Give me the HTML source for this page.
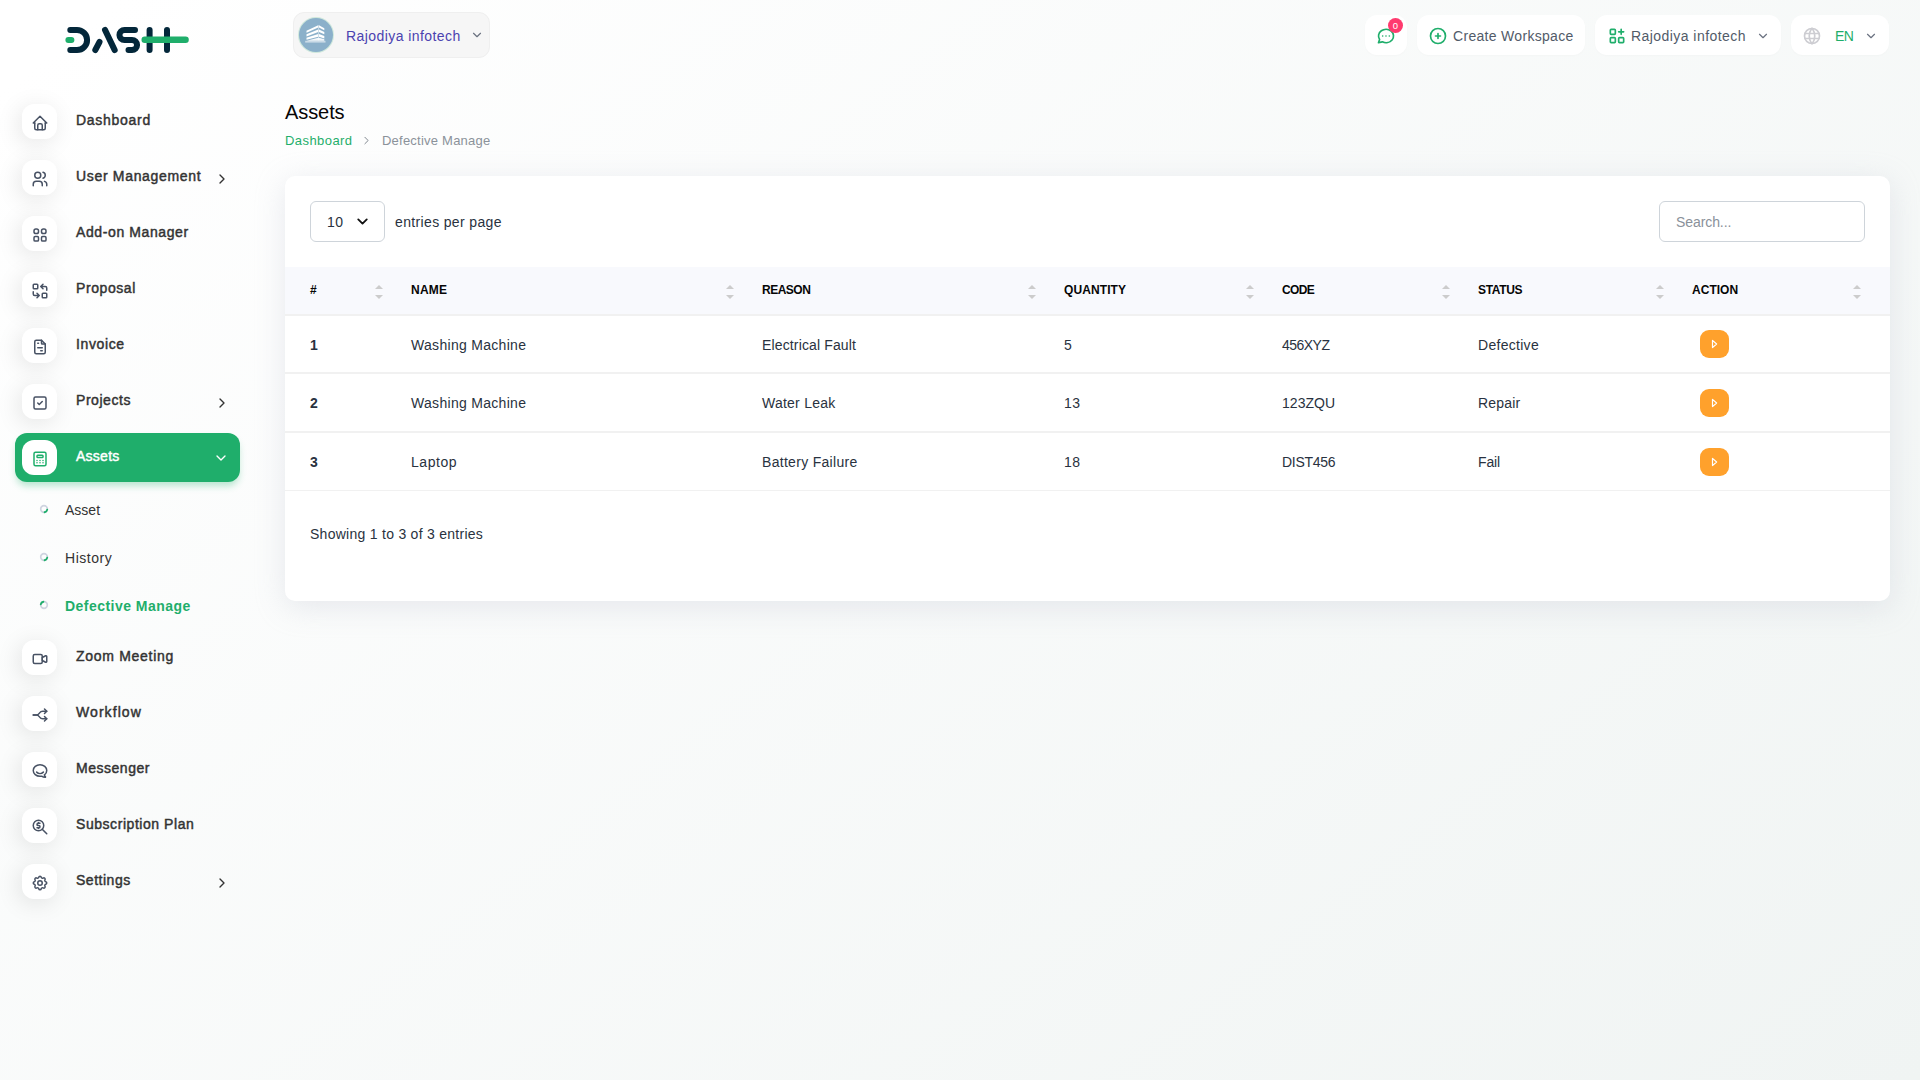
<!DOCTYPE html>
<html lang="en"><head>
<meta charset="utf-8">
<title>Assets - Defective Manage</title>
<style>
*{box-sizing:border-box;margin:0;padding:0}
html,body{width:1920px;height:1080px;overflow:hidden}
body{font-family:"Liberation Sans",sans-serif;font-size:14px;color:#293240;position:relative;
background:linear-gradient(141.55deg,rgba(240,244,243,0) 3.46%,#f0f4f3 99.86%),#fff}
.abs{position:absolute}
.t{position:absolute;white-space:nowrap;line-height:20px}
svg{display:block}
.ic{fill:none;stroke:currentColor;stroke-width:2;stroke-linecap:round;stroke-linejoin:round}

/* sidebar */
.mi{position:absolute;left:22px;width:35px;height:35px;border-radius:12px;background:#fff;
box-shadow:-3px 4px 23px rgba(0,0,0,.1);color:#485264}
.mi svg{position:absolute;left:8.800px;top:9.500px;width:18px;height:18px}
.mi.on{color:#1fae6b;box-shadow:none}
.act{position:absolute;left:15px;width:225px;height:49px;border-radius:12px;background:#1fae6b;
box-shadow:0 5px 7px -1px rgba(31,174,107,.3)}
.ml{position:absolute;left:76px;font-size:14px;font-weight:400;-webkit-text-stroke:0.450px currentColor;color:#333;white-space:nowrap;line-height:20px}
.ml.on{color:#fff}
.arr{position:absolute;left:214px;width:16px;height:16px;color:#333}
.arr svg{width:16px;height:16px}
.arr.on{color:#fff;margin-left:-1.500px;margin-top:-1.300px}
.sub{position:absolute;left:65px;font-size:14px;color:#333;white-space:nowrap;line-height:20px}
.sub.on{color:#1fae6b;font-weight:700}
.dot{position:absolute;left:39px;width:10px;height:10px}
.dot.on{transform:rotate(180deg)}

/* header */
.hb{position:absolute;top:15px;height:40px;border-radius:12px;background:#fff;box-shadow:0 1px 2px rgba(0,0,0,.02)}
.hb .t{font-size:14px;font-weight:500;color:#525b69;top:11px}
.hb svg{position:absolute}

/* card */
.card{position:absolute;left:285px;top:176px;width:1605px;height:425px;background:#fff;border-radius:10px;
box-shadow:0 6px 30px rgba(182,186,203,.3)}
.th{position:absolute;top:283px;font-size:12px;font-weight:700;color:#060606;white-space:nowrap;line-height:14px}
.td{position:absolute;font-size:14px;color:#293240;white-space:nowrap;line-height:20px}
.b{font-weight:700}
.srt{position:absolute;top:285px;width:8px;height:14px}
.btn{position:absolute;left:1700px;width:29px;height:28px;border-radius:9px;background:#ffa12c;color:#fff}
.btn svg{position:absolute;left:9px;top:8.400px;width:12px;height:12px;stroke-width:2.400}
.hl{position:absolute;left:285px;width:1605px;background:#f1f1f1}
</style>
</head>
<body>

<nav>
<!-- LOGO -->
<svg class="abs" style="left:66px;top:26px;overflow:visible" width="124" height="28" viewBox="0 0 124 28">
  <g fill="none" stroke="#03273a" stroke-width="6" stroke-linecap="round" stroke-linejoin="round">
    <path d="M4.300 3.900H11A10.100 10.100 0 0 1 11 24.100H4.300"></path>
    <path d="M29.300 24L33.500 16"></path>
    <path d="M39 3.900L48.700 24.100"></path>
    <path d="M69 3.900H58.500a5.050 5.050 0 0 0 0 10.100H66a5.050 5.050 0 0 1 0 10.100H62.500"></path>
    <path d="M83.600 3.900V24.100M101 3.900V24.100"></path>
  </g>
  <path d="M2.400 14H5.400" stroke="#1fae6b" stroke-width="6" stroke-linecap="round"></path>
  <path d="M78.700 13.800H119.600" stroke="#1fae6b" stroke-width="6.400" stroke-linecap="round"></path>
</svg>

<!-- SIDEBAR -->
<div class="mi" style="top:104px"><svg class="ic" viewBox="0 0 24 24"><path d="M5 12H3l9-9 9 9h-2"></path><path d="M5 12v7a2 2 0 0 0 2 2h10a2 2 0 0 0 2-2v-7"></path><path d="M9 21v-6a2 2 0 0 1 2-2h2a2 2 0 0 1 2 2v6"></path></svg></div>
<div class="ml" style="top: 110px; letter-spacing: 0.717px;">Dashboard</div>
<div class="mi" style="top:160px"><svg class="ic" viewBox="0 0 24 24"><circle cx="9" cy="7" r="4"></circle><path d="M3 21v-2a4 4 0 0 1 4-4h4a4 4 0 0 1 4 4v2"></path><path d="M16 3.13a4 4 0 0 1 0 7.75"></path><path d="M21 21v-2a4 4 0 0 0-3-3.850"></path></svg></div>
<div class="ml" style="top: 166px; letter-spacing: 0.68px;">User Management</div>
<div class="arr" style="top:171px"><svg class="ic" viewBox="0 0 24 24"><path d="M9 6l6 6-6 6"></path></svg></div>
<div class="mi" style="top:216px"><svg class="ic" viewBox="0 0 24 24"><rect x="4" y="4" width="6" height="6" rx="2.500"></rect><rect x="14" y="4" width="6" height="6" rx="2.500"></rect><rect x="4" y="14" width="6" height="6" rx="1.500"></rect><rect x="14" y="14" width="6" height="6" rx="1.500"></rect></svg></div>
<div class="ml" style="top: 222px; letter-spacing: 0.606px;">Add-on Manager</div>
<div class="mi" style="top:272px"><svg class="ic" viewBox="0 0 24 24"><rect x="3" y="3" width="6" height="6" rx="1"></rect><rect x="15" y="15" width="6" height="6" rx="1"></rect><path d="M21 11V8a2 2 0 0 0-2-2h-6l3 3m0-6l-3 3"></path><path d="M3 13v3a2 2 0 0 0 2 2h6l-3-3m0 6l3-3"></path></svg></div>
<div class="ml" style="top: 278px; letter-spacing: 0.576px;">Proposal</div>
<div class="mi" style="top:328px"><svg class="ic" viewBox="0 0 24 24"><path d="M14 3v4a1 1 0 0 0 1 1h4"></path><path d="M17 21H7a2 2 0 0 1-2-2V5a2 2 0 0 1 2-2h7l5 5v11a2 2 0 0 1-2 2z"></path><path d="M9 7h1M9 13h6M13 17h2"></path></svg></div>
<div class="ml" style="top: 334px; letter-spacing: 0.628px;">Invoice</div>
<div class="mi" style="top:384px"><svg class="ic" viewBox="0 0 24 24"><rect x="4" y="4" width="16" height="16" rx="2"></rect><path d="M9 12l2 2 4-4"></path></svg></div>
<div class="ml" style="top: 390px; letter-spacing: 0.556px;">Projects</div>
<div class="arr" style="top:395px"><svg class="ic" viewBox="0 0 24 24"><path d="M9 6l6 6-6 6"></path></svg></div>
<div class="act" style="top:433px"></div>
<div class="mi on" style="top:440px"><svg class="ic" viewBox="0 0 24 24"><rect x="4" y="3" width="16" height="18" rx="2"></rect><rect x="8" y="7" width="8" height="3" rx="1"></rect><path d="M8 14v.01M12 14v.01M16 14v.01M8 17v.01M12 17v.01M16 17v.01"></path></svg></div>
<div class="ml on" style="top: 446px; letter-spacing: 0.259px;">Assets</div>
<div class="arr on" style="top:451px"><svg class="ic" viewBox="0 0 24 24"><path d="M6 9l6 6 6-6"></path></svg></div>
<div class="mi" style="top:640px"><svg class="ic" viewBox="0 0 24 24"><path d="M15 10l4.553-2.276A1 1 0 0 1 21 8.618v6.764a1 1 0 0 1-1.447.894L15 14v-4z"></path><rect x="3" y="6" width="12" height="12" rx="2"></rect></svg></div>
<div class="ml" style="top: 646px; letter-spacing: 0.709px;">Zoom Meeting</div>
<div class="mi" style="top:696px"><svg class="ic" viewBox="0 0 24 24"><path d="M21 17h-5.397a5 5 0 0 1-4.096-2.133l-.514-.734A5 5 0 0 0 6.897 12H3"></path><path d="M21 7h-5.395a5 5 0 0 0-4.098 2.135l-.51.730A5 5 0 0 1 6.900 12H3"></path><path d="M18 10l3-3-3-3"></path><path d="M18 20l3-3-3-3"></path></svg></div>
<div class="ml" style="top: 702px; letter-spacing: 1.067px;">Workflow</div>
<div class="mi" style="top:752px"><svg class="ic" viewBox="0 0 24 24"><path d="M17.802 17.292s.077-.055.200-.149c1.843-1.425 3-3.490 3-5.789 0-4.286-4.030-7.764-9-7.764s-9 3.478-9 7.764c0 4.288 4.030 7.646 9 7.646.424 0 1.120-.028 2.088-.084 1.262.820 3.104 1.493 4.716 1.493.499 0 .734-.410.414-.828-.486-.596-1.156-1.551-1.416-2.290z"></path><path d="M7.500 13.500c2.500 2.500 6.500 2.500 9 0"></path></svg></div>
<div class="ml" style="top: 758px; letter-spacing: 0.521px;">Messenger</div>
<div class="mi" style="top:808px"><svg class="ic" viewBox="0 0 24 24"><circle cx="10" cy="10" r="7"></circle><path d="M21 21l-6-6"></path><path d="M12 7H9.500a1.500 1.500 0 0 0 0 3h1a1.500 1.500 0 0 1 0 3H8"></path><path d="M10 13v1m0-8v1"></path></svg></div>
<div class="ml" style="top: 814px; letter-spacing: 0.552px;">Subscription Plan</div>
<div class="mi" style="top:864px"><svg class="ic" viewBox="0 0 24 24"><path d="M10.325 4.317c.426-1.756 2.924-1.756 3.350 0a1.724 1.724 0 0 0 2.573 1.066c1.543-.940 3.310.826 2.370 2.370a1.724 1.724 0 0 0 1.065 2.572c1.756.426 1.756 2.924 0 3.350a1.724 1.724 0 0 0-1.066 2.573c.940 1.543-.826 3.310-2.370 2.370a1.724 1.724 0 0 0-2.572 1.065c-.426 1.756-2.924 1.756-3.350 0a1.724 1.724 0 0 0-2.573-1.066c-1.543.940-3.310-.826-2.370-2.370a1.724 1.724 0 0 0-1.065-2.572c-1.756-.426-1.756-2.924 0-3.350a1.724 1.724 0 0 0 1.066-2.573c-.940-1.543.826-3.310 2.370-2.370 1 .608 2.296.070 2.572-1.065z"></path><circle cx="12" cy="12" r="3"></circle></svg></div>
<div class="ml" style="top: 870px; letter-spacing: 0.518px;">Settings</div>
<div class="arr" style="top:875px"><svg class="ic" viewBox="0 0 24 24"><path d="M9 6l6 6-6 6"></path></svg></div>
<svg class="dot" style="top:504px" viewBox="0 0 10 10"><circle cx="5" cy="5" r="3.300" fill="none" stroke="#cfd4e0" stroke-width="1.700"></circle><path d="M8.250 5.600A3.300 3.300 0 0 1 5.600 8.250" fill="none" stroke="#1fae6b" stroke-width="1.800" stroke-linecap="round"></path></svg>
<div class="sub" style="top: 500px; letter-spacing: 0.012px;">Asset</div>
<svg class="dot" style="top:552px" viewBox="0 0 10 10"><circle cx="5" cy="5" r="3.300" fill="none" stroke="#cfd4e0" stroke-width="1.700"></circle><path d="M8.250 5.600A3.300 3.300 0 0 1 5.600 8.250" fill="none" stroke="#1fae6b" stroke-width="1.800" stroke-linecap="round"></path></svg>
<div class="sub" style="top: 548px; letter-spacing: 0.521px;">History</div>
<svg class="dot on" style="top:600px" viewBox="0 0 10 10"><circle cx="5" cy="5" r="3.300" fill="none" stroke="#cfd4e0" stroke-width="1.700"></circle><path d="M8.250 5.600A3.300 3.300 0 0 1 5.600 8.250" fill="none" stroke="#1fae6b" stroke-width="1.800" stroke-linecap="round"></path></svg>
<div class="sub on" style="top: 596px; letter-spacing: 0.465px;">Defective Manage</div>

</nav>
<header>
<!-- HEADER: profile -->
<div class="abs" style="left:293px;top:12px;width:197px;height:46px;border-radius:11px;background:#f6f6f6;border:1px solid #efefef"></div>
<div class="abs" style="left:299px;top:18px;width:34px;height:34px;border-radius:50%;background:#8bb0ca;box-shadow:0 0 0 1px rgba(31,174,107,.18)"></div>
<svg class="abs" style="left:304px;top:24px" width="24" height="20" viewBox="0 0 24 20">
  <g fill="#fff">
    <path d="M2.500 6.700L14.200 1.200V3.400L2.500 8.700z"></path>
    <path d="M2.500 10.200L14.200 5.400V8L2.500 12.400z"></path>
    <path d="M2.500 13.700L14.200 10V12.700L2.500 15.800z"></path>
    <path d="M15 1.200L20.300 4.200V6.300L15 3.400z"></path>
    <path d="M15 5.400L20.300 7.900V10.200L15 8z"></path>
    <path d="M15 10L20.300 11.900V14.400L15 12.700z"></path>
    <path d="M14.200 1.200h.8v15h-.8z" opacity=".6"></path>
    <path d="M1.200 16.800h20.300v1.800H1.200z" opacity=".55"></path>
    <path d="M2.500 16.800L14.200 13.800h.8l5.300 1.400v1.600z" opacity=".9"></path>
  </g>
</svg>
<div class="t" style="left: 346px; top: 26px; font-size: 14px; font-weight: 500; color: rgb(75, 66, 176); letter-spacing: 0.431px;">Rajodiya infotech</div>
<svg class="abs ic" style="left:470px;top:28px;color:#6b7280;stroke-width:2" width="14" height="14" viewBox="0 0 24 24"><path d="M6 9l6 6 6-6"></path></svg>

<!-- HEADER: right buttons -->
<div class="hb" style="left:1365px;width:42px">
  <svg class="ic" style="left:11px;top:11px;color:#1fae6b" width="20" height="20" viewBox="0 0 24 24"><path d="M3 20l1.300-3.900C1.976 12.663 2.874 8.228 6.400 5.726c3.526-2.501 8.590-2.296 11.845.480 3.255 2.777 3.695 7.266 1.029 10.501C16.608 19.942 11.659 20.922 7.700 19L3 20"></path><path d="M12 12v.01M8 12v.01M16 12v.01"></path></svg>
  <div class="abs" style="left:23px;top:3px;width:15px;height:15px;border-radius:50%;background:#ff3a6e"></div>
  <div class="t" style="left:23px;top:3px;width:15px;text-align:center;font-size:9.500px;line-height:15px;color:#fff">0</div>
</div>
<div class="hb" style="left:1417px;width:168px">
  <svg class="ic" style="left:11px;top:11px;color:#1fae6b" width="20" height="20" viewBox="0 0 24 24"><circle cx="12" cy="12" r="9"></circle><path d="M9 12h6M12 9v6"></path></svg>
  <div class="t" style="left: 36px; letter-spacing: 0.307px;">Create Workspace</div>
</div>
<div class="hb" style="left:1595px;width:186px">
  <svg class="ic" style="left:11.600px;top:11px;color:#1fae6b" width="20" height="20" viewBox="0 0 24 24"><rect x="4" y="4" width="6" height="6" rx="1"></rect><rect x="4" y="14" width="6" height="6" rx="1"></rect><rect x="14" y="14" width="6" height="6" rx="1"></rect><path d="M14 7h6M17 4v6"></path></svg>
  <div class="t" style="left: 36px; letter-spacing: 0.443px;">Rajodiya infotech</div>
  <svg class="ic" style="left:161px;top:13.500px;color:#6b7280" width="14" height="14" viewBox="0 0 24 24"><path d="M6 9l6 6 6-6"></path></svg>
</div>
<div class="hb" style="left:1791px;width:98px">
  <svg class="ic" style="left:11px;top:11px;color:#cdcdd2" width="20" height="20" viewBox="0 0 24 24"><circle cx="12" cy="12" r="9"></circle><path d="M3.600 9h16.800M3.600 15h16.800M11.500 3a17 17 0 0 0 0 18M12.500 3a17 17 0 0 1 0 18"></path></svg>
  <div class="t" style="left: 44px; color: rgb(31, 174, 107); letter-spacing: -0.5px;">EN</div>
  <svg class="ic" style="left:73px;top:13.500px;color:#6b7280" width="14" height="14" viewBox="0 0 24 24"><path d="M6 9l6 6 6-6"></path></svg>
</div>

</header>
<main>
<!-- PAGE TITLE -->
<div class="t" style="left: 285px; top: 99px; font-size: 20px; line-height: 26px; color: rgb(6, 6, 6); letter-spacing: -0.084px;">Assets</div>
<div class="t" style="left: 285px; top: 131px; font-size: 13px; color: rgb(31, 174, 107); letter-spacing: 0.436px;">Dashboard</div>
<svg class="abs ic" style="left:360px;top:134px;color:#7d858d;stroke-width:1.800" width="13" height="13" viewBox="0 0 24 24"><path d="M9 6l6 6-6 6"></path></svg>
<div class="t" style="left: 382px; top: 131px; font-size: 13px; color: rgb(139, 146, 154); letter-spacing: 0.228px;">Defective Manage</div>

<!-- CARD -->
<div class="card"></div>
<div class="abs" style="left:310px;top:201px;width:75px;height:41px;border:1px solid #ced4da;border-radius:6px;background:#fff"></div>
<div class="t" style="left: 327px; top: 212px; color: rgb(41, 50, 64); letter-spacing: 0.438px;">10</div>
<svg class="abs ic" style="left:353.800px;top:212.600px;color:#111;stroke-width:2.600" width="17" height="17" viewBox="0 0 24 24"><path d="M6 9l6 6 6-6"></path></svg>
<div class="t" style="left: 395px; top: 212px; letter-spacing: 0.352px;">entries per page</div>
<div class="abs" style="left:1659px;top:201px;width:206px;height:41px;border:1px solid #ced4da;border-radius:6px;background:#fff"></div>
<div class="t" style="left: 1676px; top: 212px; color: rgb(138, 145, 154); letter-spacing: -0.082px;">Search...</div>

<div class="abs" style="left:285px;top:267px;width:1605px;height:47px;background:#f8f9fd"></div>
<div class="th" style="left:310px">#</div>
<svg class="srt" style="left:375px" viewBox="0 0 8 14"><path d="M0 4L4 0L8 4z" fill="#ccc"></path><path d="M0 10L4 14L8 10z" fill="#ccc"></path></svg>
<div class="th" style="left: 411px; letter-spacing: 0.245px;">NAME</div>
<svg class="srt" style="left:726px" viewBox="0 0 8 14"><path d="M0 4L4 0L8 4z" fill="#ccc"></path><path d="M0 10L4 14L8 10z" fill="#ccc"></path></svg>
<div class="th" style="left: 762px; letter-spacing: -0.5px;">REASON</div>
<svg class="srt" style="left:1028px" viewBox="0 0 8 14"><path d="M0 4L4 0L8 4z" fill="#ccc"></path><path d="M0 10L4 14L8 10z" fill="#ccc"></path></svg>
<div class="th" style="left: 1064px; letter-spacing: 0.096px;">QUANTITY</div>
<svg class="srt" style="left:1246px" viewBox="0 0 8 14"><path d="M0 4L4 0L8 4z" fill="#ccc"></path><path d="M0 10L4 14L8 10z" fill="#ccc"></path></svg>
<div class="th" style="left: 1282px; letter-spacing: -0.62px;">CODE</div>
<svg class="srt" style="left:1442px" viewBox="0 0 8 14"><path d="M0 4L4 0L8 4z" fill="#ccc"></path><path d="M0 10L4 14L8 10z" fill="#ccc"></path></svg>
<div class="th" style="left: 1478px; letter-spacing: -0.35px;">STATUS</div>
<svg class="srt" style="left:1656px" viewBox="0 0 8 14"><path d="M0 4L4 0L8 4z" fill="#ccc"></path><path d="M0 10L4 14L8 10z" fill="#ccc"></path></svg>
<div class="th" style="left: 1692px; letter-spacing: 0.031px;">ACTION</div>
<svg class="srt" style="left:1853px" viewBox="0 0 8 14"><path d="M0 4L4 0L8 4z" fill="#ccc"></path><path d="M0 10L4 14L8 10z" fill="#ccc"></path></svg>
<div class="hl" style="top:314px;height:2px"></div>
<div class="hl" style="top:372px;height:2px"></div>
<div class="hl" style="top:431px;height:2px"></div>
<div class="hl" style="top:490px;height:1px"></div>
<div class="td b" style="left:310px;top:335px">1</div>
<div class="td" style="left: 411px; top: 335px; letter-spacing: 0.3px;">Washing Machine</div>
<div class="td" style="left: 762px; top: 335px; letter-spacing: 0.14px;">Electrical Fault</div>
<div class="td" style="left:1064px;top:335px">5</div>
<div class="td" style="left: 1282px; top: 335px; letter-spacing: -0.528px;">456XYZ</div>
<div class="td" style="left: 1478px; top: 335px; letter-spacing: 0.291px;">Defective</div>
<div class="btn" style="top:330px"><svg class="ic" viewBox="0 0 24 24"><path d="M7 4.800v14.400l8.200-7.200z"></path></svg></div>
<div class="td b" style="left:310px;top:393px">2</div>
<div class="td" style="left: 411px; top: 393px; letter-spacing: 0.3px;">Washing Machine</div>
<div class="td" style="left: 762px; top: 393px; letter-spacing: 0.24px;">Water Leak</div>
<div class="td" style="left: 1064px; top: 393px; letter-spacing: 0.438px;">13</div>
<div class="td" style="left: 1282px; top: 393px; letter-spacing: 0.041px;">123ZQU</div>
<div class="td" style="left: 1478px; top: 393px; letter-spacing: 0.172px;">Repair</div>
<div class="btn" style="top:389px"><svg class="ic" viewBox="0 0 24 24"><path d="M7 4.800v14.400l8.200-7.200z"></path></svg></div>
<div class="td b" style="left:310px;top:452px">3</div>
<div class="td" style="left: 411px; top: 452px; letter-spacing: 0.562px;">Laptop</div>
<div class="td" style="left: 762px; top: 452px; letter-spacing: 0.302px;">Battery Failure</div>
<div class="td" style="left: 1064px; top: 452px; letter-spacing: 0.438px;">18</div>
<div class="td" style="left: 1282px; top: 452px; letter-spacing: -0.294px;">DIST456</div>
<div class="td" style="left: 1478px; top: 452px; letter-spacing: -0.161px;">Fail</div>
<div class="btn" style="top:447.5px"><svg class="ic" viewBox="0 0 24 24"><path d="M7 4.800v14.400l8.200-7.200z"></path></svg></div>
<div class="t" style="left: 310px; top: 524px; letter-spacing: 0.273px;">Showing 1 to 3 of 3 entries</div>

</main>


</body></html>
